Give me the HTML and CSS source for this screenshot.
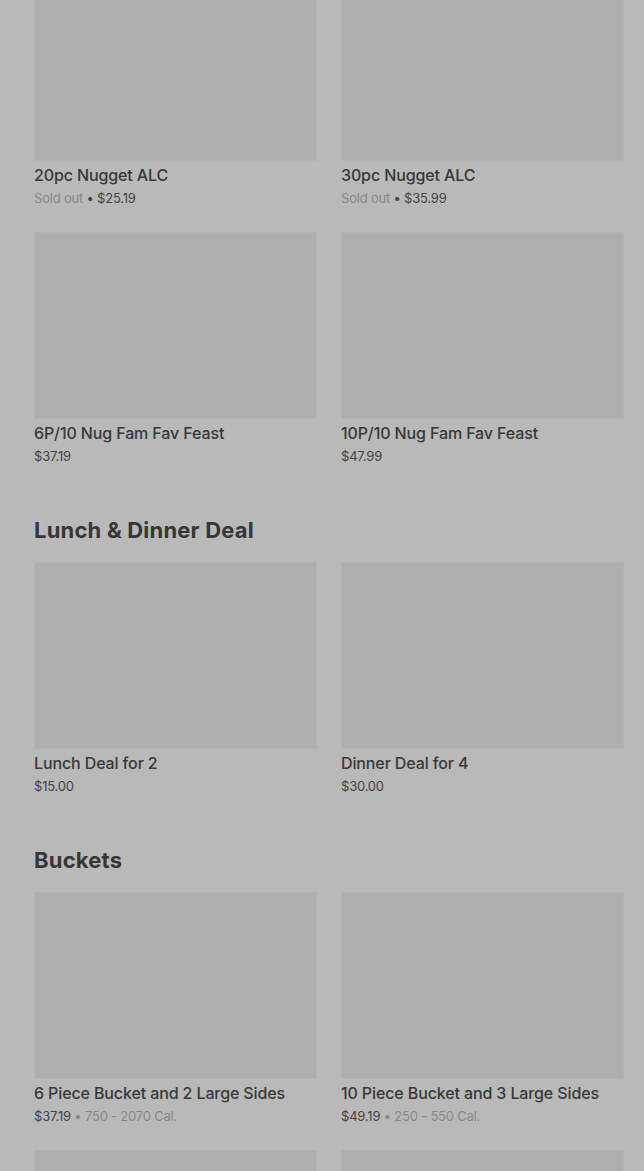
FILE: index.html
```html
<!DOCTYPE html>
<html lang="en">
<head>
    <meta charset="UTF-8">
    <meta name="viewport" content="width=device-width, initial-scale=1.0">
    <title>Menu</title>
    <link rel="stylesheet" href="styles.css">
</head>
<body>
    <div class="menu">
        <section class="section section-scrolled">
            <div class="grid">
                <div class="card">
                    <div class="card-img"></div>
                    <div class="card-title">20pc Nugget ALC</div>
                    <div class="card-meta"><span class="muted">Sold out</span> • $25.19</div>
                </div>
                <div class="card">
                    <div class="card-img"></div>
                    <div class="card-title">30pc Nugget ALC</div>
                    <div class="card-meta"><span class="muted">Sold out</span> • $35.99</div>
                </div>
                <div class="card">
                    <div class="card-img"></div>
                    <div class="card-title">6P/10 Nug Fam Fav Feast</div>
                    <div class="card-meta">$37.19</div>
                </div>
                <div class="card">
                    <div class="card-img"></div>
                    <div class="card-title">10P/10 Nug Fam Fav Feast</div>
                    <div class="card-meta">$47.99</div>
                </div>
            </div>
        </section>

        <section class="section">
            <h2>Lunch &amp; Dinner Deal</h2>
            <div class="grid">
                <div class="card">
                    <div class="card-img"></div>
                    <div class="card-title">Lunch Deal for 2</div>
                    <div class="card-meta">$15.00</div>
                </div>
                <div class="card">
                    <div class="card-img"></div>
                    <div class="card-title">Dinner Deal for 4</div>
                    <div class="card-meta">$30.00</div>
                </div>
            </div>
        </section>

        <section class="section">
            <h2>Buckets</h2>
            <div class="grid">
                <div class="card">
                    <div class="card-img"></div>
                    <div class="card-title">6 Piece Bucket and 2 Large Sides</div>
                    <div class="card-meta">$37.19 <span class="muted">• 750 - 2070 Cal.</span></div>
                </div>
                <div class="card">
                    <div class="card-img"></div>
                    <div class="card-title">10 Piece Bucket and 3 Large Sides</div>
                    <div class="card-meta">$49.19 <span class="muted">• 250 - 550 Cal.</span></div>
                </div>
                <div class="card">
                    <div class="card-img"></div>
                </div>
                <div class="card">
                    <div class="card-img"></div>
                </div>
            </div>
        </section>
    </div>
</body>
</html>
```

FILE: styles.css
```css
html, body {
    margin: 0;
    background: #b9b9b9;
}
body {
    font-family: Inter, "Liberation Sans", sans-serif;
    color: #3a3a3a;
    overflow: hidden;
}
.menu {
    padding: 0 20px 0 34px;
}
.section-scrolled {
    margin-top: -26px;
}
.section + .section {
    margin-top: 49px;
}
h2 {
    margin: 0 0 18px;
    font-size: 22px;
    line-height: 28px;
    font-weight: 700;
    letter-spacing: 0.2px;
    color: #363636;
}
.grid {
    display: grid;
    grid-template-columns: 1fr 1fr;
    column-gap: 24px;
    row-gap: 23px;
}
.card-img {
    height: 187px;
    background: #aeaeae;
    border: 1px solid #b2b2b2;
    box-sizing: border-box;
    border-radius: 2px;
}
.card-title {
    margin-top: 2px;
    font-size: 16px;
    line-height: 24px;
    font-weight: 500;
    letter-spacing: -0.12px;
    color: #383838;
    white-space: nowrap;
}
.card-meta {
    font-size: 13px;
    line-height: 22px;
    color: #444;
    letter-spacing: -0.2px;
}
.muted {
    color: #878787;
}
```
